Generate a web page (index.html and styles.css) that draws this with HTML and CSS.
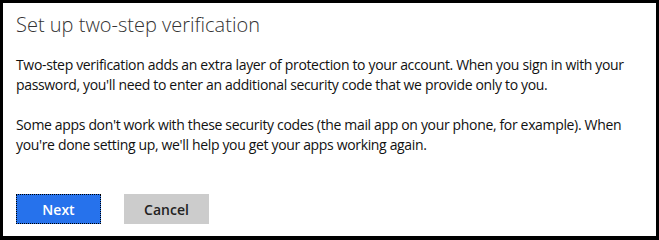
FILE: index.html
```html
<!DOCTYPE html>
<html>
<head>
<meta charset="utf-8">
<link rel="stylesheet" href="styles.css">
</head>
<body>
<div class="dialog">
  <h1 class="title">Set up two-step verification</h1>
  <p class="text">Two-step verification adds an extra layer of protection to your account. When you sign in with your password, you'll need to enter an additional security code that we provide only to you.</p>
  <p class="text">Some apps don't work with these security codes (the mail app on your phone, for example). When you're done setting up, we'll help you get your apps working again.</p>
  <div class="actions">
    <button class="btn btn-primary">Next</button>
    <button class="btn btn-secondary">Cancel</button>
  </div>
</div>
</body>
</html>
```

FILE: styles.css
```css
html, body {
  margin: 0;
  padding: 0;
  background: #000;
}
.dialog {
  box-sizing: border-box;
  width: 659px;
  height: 240px;
  border: 3px solid #000;
  border-bottom-width: 4px;
  background: #fff;
  padding: 8px 13px 0 13px;
  font-family: "Open Sans", "Noto Sans", sans-serif;
  color: #111;
}
.title {
  margin: 0;
  font-size: 20px;
  font-weight: 300;
  line-height: 28px;
  color: #333;
}
.text {
  margin: 16px 0 0 0;
  font-size: 14px;
  line-height: 20px;
  letter-spacing: -0.34px;
}
.text + .text {
  margin-top: 20px;
}
.actions {
  display: flex;
  gap: 23px;
  margin-top: 39px;
}
.btn {
  box-sizing: border-box;
  width: 85px;
  height: 30px;
  border: 1px solid transparent;
  font-family: inherit;
  font-size: 14px;
  font-weight: 600;
  padding: 0;
}
.btn-primary {
  background: #2672ec;
  color: #fff;
  border: 1px dotted #000;
}
.btn-secondary {
  background: #cccccc;
  color: #222;
}
```
